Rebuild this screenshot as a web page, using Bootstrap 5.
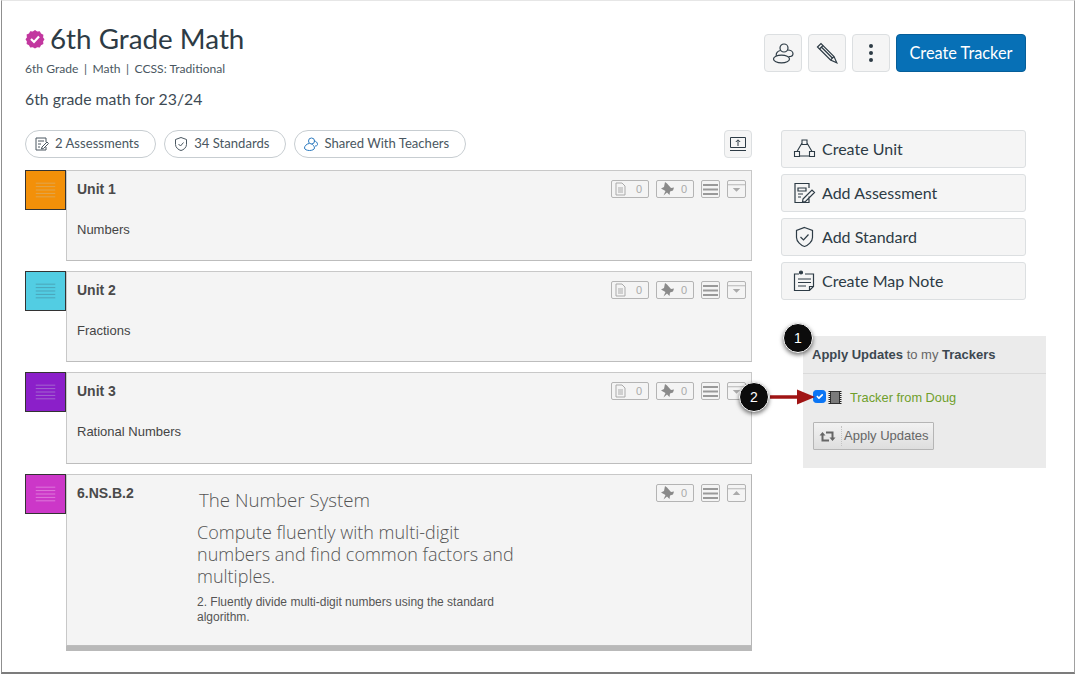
<!DOCTYPE html>
<html lang="en">
<head>
  <meta charset="UTF-8" />
  <meta name="viewport" content="width=device-width, initial-scale=1.0" />
  <title>6th Grade Math</title>
  <link href="https://cdn.jsdelivr.net/npm/bootstrap@5.3.0/dist/css/bootstrap.min.css" rel="stylesheet" />
  <script src="https://cdn.jsdelivr.net/npm/bootstrap@5.3.0/dist/js/bootstrap.bundle.min.js"></script>
  <style>
    html, body { height: 100%; }
    body {
      background: #fff;
      color: #2d3b45;
      font-family: Lato, "Liberation Sans", sans-serif;
      overflow: hidden;
    }
    .shot-frame {
      position: relative;
      width: 1074px;
      height: 674px;
      margin-left: 1px;
      border: 1px solid #d4d4d4;
      border-left-color: #8f8f8f;
      border-right-color: #a0a0a0;
      border-bottom: 2px solid #7c7c7c;
      border-top: 1px solid #e6e6e6;
      padding: 22px 23px 0 23px;
    }
    .map-head { height: 107px; }
    .map-title { font-size: 27.8px; font-weight: 400; line-height: 32px; margin: 0; }
    .title-badge { margin-right: 5px; }
    .map-meta { font-size: 12.1px; line-height: 15px; color: #4a5761; margin-top: 6px; }
    .meta-sep { margin: 0 5.5px; }
    .map-desc { font-size: 15.8px; line-height: 20px; color: #3d4a54; margin-top: 13px; }
    .head-tools { padding-top: 11px; margin-right: 25px; gap: 6px; }
    .tool-btn {
      width: 38px; height: 38px; padding: 0;
      background: #f5f5f5; border: 1px solid #dcdfe1; border-radius: 4px;
      color: #2d3b45;
    }
    .tracker-btn {
      height: 38px; width: 130px; padding: 0;
      background: #0770b6; border: 1px solid #065e99; border-radius: 4px;
      color: #fff; font-size: 16.3px;
    }
    .main-cols { width: 1001px; }
    .left-col { width: 727px; }
    .right-col { width: 245px; }
    .count-pill {
      height: 28px; padding: 0 16px 0 8px;
      border: 1px solid #c7cdd1; border-radius: 14px;
      font-size: 13.1px; color: #4a5761; background: #fff;
    }
    .count-pill svg { margin-right: 5px; }
    .export-btn {
      width: 28px; height: 28px; padding: 0;
      background: #f5f5f5; border: 1px solid #dcdfe1; border-radius: 4px;
    }
    .pill-row { height: 40px; }
    .unit-row { margin-bottom: 10px; }
    .unit-swatch {
      flex: 0 0 41px; width: 41px; height: 40px;
      border: 1px solid #333;
    }
    .unit-swatch svg { display: block; margin: 0 auto; }
    .unit-box {
      flex: 1 1 auto;
      background: #f4f4f4;
      border: 1px solid #c8c8c8;
      border-bottom-color: #bdbdbd;
      position: relative;
      padding: 10px 10px 0 10px;
      font-family: "Liberation Sans", Arial, sans-serif;
      color: #444;
    }
    .unit-h { height: 91px; }
    .unit-row:nth-child(3) .unit-h { height: 92px; }
    .unit-tall { height: 172px; border-right-color: #b5b5b5; box-shadow: 0 5px 0 #b9b9b9; }
    .unit-name { font-size: 14px; font-weight: 700; line-height: 17px; color: #4a4a4a; }
    .unit-text { font-size: 13px; line-height: 16px; color: #444; margin-top: 24px; }
    .tools-wrap { margin-top: 9px; margin-right: 5px; gap: 7px; }
    .mini-tool {
      height: 18px; border: 1px solid #b4b4b4; border-radius: 2px;
      font-size: 11px; color: #aaa; background: #f4f4f4; line-height: 16px;
    }
    .mini-count { width: 38px; padding: 0 6px 0 3px; }
    .mini-square { width: 19px; }
    .std-body { width: 320px; margin-left: 120px; margin-top: -14px; font-family: "Open Sans", sans-serif; font-weight: 300; color: #555; }
    .std-domain { font-size: 18.7px; line-height: 24px; margin-left: 2px; }
    .std-cluster { font-size: 18px; line-height: 22px; margin-top: 9px; }
    .std-detail { font-family: "Liberation Sans", Arial, sans-serif; font-weight: 400; font-size: 12px; line-height: 15px; color: #555; margin-top: 8px; width: 310px; }
    .side-btn {
      height: 38px; width: 245px; margin-bottom: 6px; padding: 0 0 0 11px;
      background: #f5f5f5; border: 1px solid #dcdfe1; border-radius: 3px;
      font-size: 16px; color: #2d3b45; text-align: left;
    }
    .side-btn svg { margin-right: 6px; flex: none; }
    .updates-panel {
      width: 243px; height: 132px; margin-left: 22px; margin-top: 36px;
      background: #ebebeb;
      font-family: "Liberation Sans", Arial, sans-serif;
    }
    .updates-head {
      height: 38px; padding: 10px 0 0 9px;
      font-size: 13px; line-height: 17px; color: #666;
      border-bottom: 1px solid #dadada;
    }
    .updates-head b { color: #3c4750; }
    .tracker-line { padding: 16px 0 0 10px; height: 48px; font-size: 12.8px; }
    .tracker-check { width: 13px; height: 13px; margin: 0; border-radius: 2px; background-color: #0a75f5 !important; border-color: #0a75f5 !important; flex: none; }
    .notebook-ico { flex: none; margin-left: 2px; }
    .tracker-link { color: #6f9f2c; margin-left: 8px; text-decoration: none; line-height: 15px; }
    .apply-btn {
      margin-left: 10px; width: 121px; height: 28px; padding: 0;
      border: 1px solid #b5b5b5; border-radius: 1px;
      background: linear-gradient(#f2f2f2, #dedede);
      font-size: 13px; color: #666;
    }
    .apply-ico { padding: 0 5px; border-right: 1px dotted #c4c4c4; height: 20px; margin-right: 2px; }
    .step-dot {
      position: absolute; width: 30px; height: 30px; border-radius: 50%;
      background: #0c0c0c; color: #fff; border: 1px solid #fff;
      font-family: "Liberation Sans", Arial, sans-serif; font-size: 14px;
      box-shadow: 0 2px 4px rgba(0,0,0,.55);
    }
    .step-one { left: 781px; top: 322px; }
    .step-two { left: 737px; top: 381px; }
    .step-arrow { position: absolute; left: 768px; top: 387px; }
  </style>
</head>
<body>
  <div class="shot-frame">
    <!-- Header -->
    <div class="d-flex justify-content-between map-head">
      <div>
        <h1 class="map-title d-flex align-items-center">
          <svg width="20" height="20" viewBox="0 0 20 20" class="title-badge">
            <path fill="#c2379f" d="M10 1l2.200 1.500 2.600-.3 1.200 2.400 2.400 1.200-.3 2.600 1.400 1.800-1.400 2.200.3 2.600-2.400 1.200-1.200 2.300-2.600-.2-2.200 1.200-2.200-1.200-2.600.2L4 16.200 1.600 15l.3-2.600-1.400-2.200 1.400-1.800-.3-2.800L4 4.600l1.200-2.400 2.600.3z"/>
            <path fill="none" stroke="#fff" stroke-width="2.200" d="M6 10l3 3 5-5.500"/>
          </svg>
          6th Grade Math
        </h1>
        <div class="map-meta">6th Grade<span class="meta-sep">|</span>Math<span class="meta-sep">|</span>CCSS: Traditional</div>
        <div class="map-desc">6th grade math for 23/24</div>
      </div>
      <div class="d-flex align-items-start head-tools">
        <button type="button" class="btn tool-btn d-flex align-items-center justify-content-center">
          <svg width="22" height="22" viewBox="0 0 22 22" fill="none" stroke="#2d3b45" stroke-width="1.200">
            <circle cx="12" cy="6" r="4"/>
            <path d="M15.500 8c3 0 5.500 1.500 5.500 3.700 0 2-2 3-4.500 3"/>
            <path d="M8.500 8.500C5.500 9 3.800 11 4.300 13.800"/>
            <ellipse cx="9.500" cy="17" rx="8" ry="3.800"/>
          </svg>
        </button>
        <button type="button" class="btn tool-btn d-flex align-items-center justify-content-center">
          <svg width="22" height="22" viewBox="0 0 22 22" fill="none" stroke="#2d3b45" stroke-width="1.200">
            <path d="M1.500 5L5 1.500 18 14.500l2.800 6.300-6.300-2.800z"/><path d="M3.500 7L7 3.500M14.500 18l3.500-3.500M5.800 5.500l10.500 10.500"/>
          </svg>
        </button>
        <button type="button" class="btn tool-btn d-flex align-items-center justify-content-center">
          <svg width="6" height="20" viewBox="0 0 6 20" fill="#2d3b45"><circle cx="3" cy="3" r="2"/><circle cx="3" cy="10" r="2"/><circle cx="3" cy="17" r="2"/></svg>
        </button>
        <button type="button" class="btn tracker-btn">Create Tracker</button>
      </div>
    </div>

    <div class="d-flex justify-content-between main-cols">
      <!-- Left column: units and standards -->
      <div class="left-col">
        <div class="d-flex align-items-start justify-content-between pill-row">
          <div class="d-flex gap-2">
            <div class="count-pill d-flex align-items-center">
              <svg width="16" height="16" viewBox="0 0 16 16" fill="none" stroke="#4a5761"><path d="M12 6V2H2v12h10v-3M4 5h6M4 8h3M4 11h2M8 11l5-5 1.500 1.500-5 5-2 .5z"/></svg>
              <span>2 Assessments</span>
            </div>
            <div class="count-pill d-flex align-items-center">
              <svg width="16" height="16" viewBox="0 0 16 16" fill="none" stroke="#4a5761"><path d="M8 1.500l5.500 2v5c0 3-3 5.500-5.500 6-2.500-.5-5.500-3-5.500-6v-5zM5.500 8l2 2 3-3.500"/></svg>
              <span>34 Standards</span>
            </div>
            <div class="count-pill d-flex align-items-center">
              <svg width="16" height="16" viewBox="0 0 16 16" fill="none" stroke="#2b7abf"><circle cx="8.500" cy="5" r="3"/><path d="M11 5c2 0 3.500 1.500 3.500 3.500 0 1-1 1.500-2.500 1.500M6 7.500C3.500 8 1.500 10 1.500 12c0 1.500 2.500 2.500 5 2.500s5-1 5-2.500-1.500-3.500-3-4"/></svg>
              <span>Shared With Teachers</span>
            </div>
          </div>
          <button type="button" class="btn export-btn d-flex align-items-center justify-content-center">
            <svg width="18" height="16" viewBox="0 0 18 16" fill="none" stroke="#2d3b45"><path d="M1.500 1.500h15v10h-15zM1 14.500h16"/><path d="M9 10V4M6.800 6L9 3.800 11.200 6"/></svg>
          </button>
        </div>

        <div id="unitList"></div>
      </div>

      <!-- Right column: add actions and updates -->
      <div class="right-col">
        <button type="button" class="btn side-btn d-flex align-items-center">
          <svg width="23" height="22" viewBox="0 0 23 22" fill="none" stroke="#2d3b45" stroke-width="1.100"><path d="M9 2h5v4.500H9zM1.500 13.500h5v5h-5zM16.500 13.500h5v5h-5zM6.500 18h10M9 5L4 13.500M14 5l5 8.500"/></svg>
          Create Unit
        </button>
        <button type="button" class="btn side-btn d-flex align-items-center">
          <svg width="23" height="22" viewBox="0 0 23 22" fill="none" stroke="#2d3b45" stroke-width="1.200"><path d="M16 6V1.500H2v19h14v-6M5 6h8v3H5zM5 12h5M5 15h3M10 17l9-9 2.500 2.500-9 9-3 .5z"/></svg>
          Add Assessment
        </button>
        <button type="button" class="btn side-btn d-flex align-items-center">
          <svg width="23" height="22" viewBox="0 0 23 22" fill="none" stroke="#2d3b45" stroke-width="1.200"><path d="M11.500 1.500l8 3v7c0 4-4.500 8-8 9-3.500-1-8-5-8-9v-7zM7.500 11l3 3 5-5.500"/></svg>
          Add Standard
        </button>
        <button type="button" class="btn side-btn d-flex align-items-center">
          <svg width="23" height="22" viewBox="0 0 23 22" fill="none" stroke="#2d3b45" stroke-width="1.200"><path d="M6 4H1.500v16.500h15l4-4V4H12M16.500 20.500v-4h4M5 9h13M5 12.500h13M5 16h8"/><circle cx="8" cy="2.500" r="1.500" fill="#2d3b45"/></svg>
          Create Map Note
        </button>

        <div class="updates-panel">
          <div class="updates-head"><b>Apply Updates</b> to my <b>Trackers</b></div>
          <div class="tracker-line d-flex align-items-start">
            <input class="form-check-input tracker-check" type="checkbox" checked aria-label="Tracker from Doug" />
            <svg width="14" height="15" viewBox="0 0 14 15" class="notebook-ico">
              <rect x="2.500" y="1.500" width="9" height="12" fill="#7a7a7a" stroke="#333"/>
              <path d="M1.500 1v13M12.500 1v13" stroke="#222" stroke-width="2" stroke-dasharray="1 1"/>
            </svg>
            <a class="tracker-link" href="#">Tracker from Doug</a>
          </div>
          <button type="button" class="btn apply-btn d-flex align-items-center">
            <span class="apply-ico d-flex align-items-center">
              <svg width="17" height="11" viewBox="0 0 17 11" fill="#666">
                <path d="M.5 4.500L3.500 1l3 3.500zM10.500 6.500L13.500 10l3-3.500z"/>
                <path d="M3.500 4v5.500H10M13.500 7V1.500H7" fill="none" stroke="#666" stroke-width="2"/>
              </svg>
            </span>
            Apply Updates
          </button>
        </div>
      </div>
    </div>

    <!-- Callouts over the page -->
    <div class="step-dot step-one d-flex align-items-center justify-content-center">1</div>
    <svg class="step-arrow" width="46" height="18" viewBox="0 0 46 18">
      <path d="M0 9h28" stroke="#a01414" stroke-width="3.500"/><path d="M45 9L27 1.500v15z" fill="#a01414"/>
    </svg>
    <div class="step-dot step-two d-flex align-items-center justify-content-center">2</div>
  </div>

  <script>
    // Unit rows share the same markup, only colour and text differ
    const units = [
      { color: '#f39009', line: '#e0a64e', name: 'Unit 1', text: 'Numbers' },
      { color: '#52cde3', line: '#4ba3b8', name: 'Unit 2', text: 'Fractions' },
      { color: '#8b1fc9', line: '#a467d0', name: 'Unit 3', text: 'Rational Numbers' },
    ];

    function swatch(color, line) {
      const bars = [12, 15.5, 19, 22.5, 26].map(y =>
        `<path d="M10 ${y}h20" stroke="${line}" stroke-width="1"/>`).join('');
      return `<div class="unit-swatch" style="background:${color}"><svg width="39" height="38" viewBox="0 0 40 38">${bars}</svg></div>`;
    }

    const docIcon = `<svg width="11" height="14" viewBox="0 0 11 14" fill="none" stroke="#aaa"><path d="M1 1h6l3 3v9H1zM3 6h5M3 8h5M3 10h5"/></svg>`;
    const pinIcon = `<svg width="16" height="15" viewBox="0 0 16 15" fill="#8a8a8a"><path d="M5 0l2 1.500 4 4.500 3-.5-1 3-3 1-.5 3.500-2.500-2.500-3.500 3 2-4.500L1 6.500l3-1.500z"/></svg>`;
    const menuIcon = `<svg width="15" height="11" viewBox="0 0 15 11" fill="#999"><path d="M0 0h15v2H0zM0 4.500h15v2H0zM0 9h15v2H0z"/></svg>`;

    function caret(up) {
      const tri = up ? 'M5 10l4-4 4 4z' : 'M5 7h8l-4 4z';
      return `<svg width="18" height="16" viewBox="0 0 18 16"><path d="M0 3.500h18" stroke="#b4b4b4"/><path d="${tri}" fill="#aaa"/></svg>`;
    }

    function miniTools(up, withDoc) {
      const doc = withDoc ? `<div class="mini-tool mini-count d-flex align-items-center justify-content-between">${docIcon}<span>0</span></div>` : '';
      return `<div class="d-flex position-absolute top-0 end-0 tools-wrap">${doc}
        <div class="mini-tool mini-count d-flex align-items-center justify-content-between">${pinIcon}<span>0</span></div>
        <div class="mini-tool mini-square d-flex align-items-center justify-content-center">${menuIcon}</div>
        <div class="mini-tool mini-square d-flex align-items-center justify-content-center">${caret(up)}</div>
      </div>`;
    }

    const rows = units.map(u => `
      <div class="d-flex align-items-start unit-row">
        ${swatch(u.color, u.line)}
        <div class="unit-box unit-h">
          <div class="unit-name">${u.name}</div>
          <div class="unit-text">${u.text}</div>
          ${miniTools(false, true)}
        </div>
      </div>`);

    rows.push(`
      <div class="d-flex align-items-start unit-row">
        ${swatch('#cc37c8', '#de79da')}
        <div class="unit-box unit-tall">
          <div class="unit-name">6.NS.B.2</div>
          <div class="std-body">
            <div class="std-domain">The Number System</div>
            <div class="std-cluster">Compute fluently with multi-digit numbers and find common factors and multiples.</div>
            <div class="std-detail">2. Fluently divide multi-digit numbers using the standard algorithm.</div>
          </div>
          ${miniTools(true, false)}
        </div>
      </div>`);

    document.getElementById('unitList').innerHTML = rows.join('');
  </script>
</body>
</html>
